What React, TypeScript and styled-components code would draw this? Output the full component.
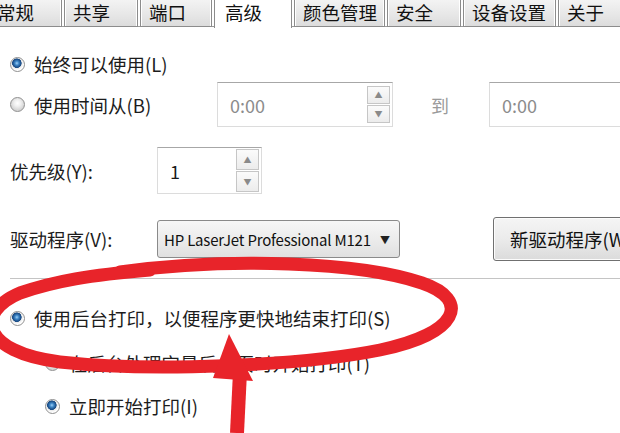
import styled, { createGlobalStyle } from "styled-components";

const GlobalStyle = createGlobalStyle`
  html, body {
    margin: 0;
    padding: 0;
    background: #ffffff;
  }
  body {
    width: 620px;
    height: 433px;
    overflow: hidden;
    font-family: "Noto Sans CJK SC", "Noto Sans", sans-serif;
    color: #1c1c1c;
  }
`;

const Page = styled.div`
  position: relative;
  width: 620px;
  height: 433px;
  overflow: hidden;
  background: #fff;
`;

const TabBar = styled.div`
  display: flex;
  height: 27px;
  margin-left: -12px;
  border-bottom: 1px solid #9a9a9a;
  box-sizing: border-box;
`;

const Tab = styled.div<{ $w: number; $active?: boolean }>`
  flex: none;
  width: ${(p) => p.$w}px;
  box-sizing: border-box;
  margin-right: 2px;
  padding-left: ${(p) => (p.$active ? 10 : 8)}px;
  height: ${(p) => (p.$active ? 28 : 27)}px;
  border: 1px solid #8c8c8c;
  border-top: none;
  border-bottom: ${(p) => (p.$active ? "none" : "1px solid #8c8c8c")};
  background: ${(p) =>
    p.$active ? "#ffffff" : "linear-gradient(#f3f3f3, #e6e6e6 60%, #dcdcdc)"};
  font-size: 18.5px;
  line-height: 25px;
  color: #111;
  white-space: nowrap;
  overflow: hidden;
  box-shadow: ${(p) => (p.$active ? "none" : "inset 1px 0 0 #fff, inset -1px 0 0 #fff")};
`;

const Content = styled.div`
  display: flex;
  flex-direction: column;
  padding-left: 10px;
`;

const Row = styled.div<{ $h: number; $mt: number; $indent?: number }>`
  display: flex;
  align-items: center;
  height: ${(p) => p.$h}px;
  margin-top: ${(p) => p.$mt}px;
  padding-left: ${(p) => p.$indent ?? 0}px;
  font-size: 18.5px;
  white-space: nowrap;
`;

const Label = styled.span<{ $w?: number }>`
  flex: none;
  width: ${(p) => (p.$w ? `${p.$w}px` : "auto")};
  color: #1c1c1c;
`;

const RadioDot = styled.span<{ $on?: boolean }>`
  flex: none;
  width: 15px;
  height: 15px;
  margin-right: 9px;
  border-radius: 50%;
  box-sizing: border-box;
  border: 1px solid #8f8f8f;
  background: ${(p) =>
    p.$on
      ? "radial-gradient(circle at 45% 40%, #9fd0f5 0, #3d86c8 2px, #1d4f88 4px, #1d4f88 4.5px, #e9e9e9 5px, #ffffff 7px)"
      : "radial-gradient(circle at 50% 40%, #ffffff 0, #f1f1f1 3px, #d4d4d4 7px)"};
`;

const Field = styled.div<{ $w: number; $h: number }>`
  flex: none;
  display: flex;
  align-items: center;
  box-sizing: border-box;
  width: ${(p) => p.$w}px;
  height: ${(p) => p.$h}px;
  border: 1px solid #dcdcdc;
  border-top-color: #a7a7a7;
  background: #fff;
  padding-left: 12px;
  font-size: 18px;
`;

const FieldText = styled.span<{ $muted?: boolean }>`
  flex: 1;
  color: ${(p) => (p.$muted ? "#8c8c8c" : "#1a1a1a")};
`;

const Spinner = styled.div<{ $h: number }>`
  flex: none;
  display: flex;
  flex-direction: column;
  width: 23px;
  height: ${(p) => p.$h}px;
  margin-right: 2px;
  gap: 1px;
`;

const SpinBtn = styled.div`
  flex: 1;
  display: flex;
  align-items: center;
  justify-content: center;
  border: 1px solid #c6c6c6;
  background: linear-gradient(#fbfbfb, #ececec);
  font-size: 8px;
  color: #8a8a8a;
  line-height: 1;
`;

const To = styled.span`
  flex: none;
  margin: 0 40px 0 38px;
  color: #9a9a9a;
  font-size: 18px;
`;

const Select = styled.div`
  flex: none;
  display: flex;
  align-items: center;
  box-sizing: border-box;
  width: 243px;
  height: 38px;
  padding: 0 9px 0 6px;
  border: 1px solid #8a8a8a;
  border-radius: 3px;
  background: linear-gradient(#f7f7f7, #ececec 50%, #e0e0e0);
  font-size: 15px;
  color: #111;
`;

const SelectText = styled.span`
  flex: 1;
  letter-spacing: -0.2px;
`;

const Caret = styled.span`
  font-size: 10px;
  color: #222;
`;

const Button = styled.div`
  flex: none;
  display: flex;
  align-items: center;
  box-sizing: border-box;
  width: 160px;
  height: 44px;
  margin-left: 93px;
  padding-left: 16px;
  border: 1px solid #707070;
  border-radius: 3px;
  background: linear-gradient(#f5f5f5, #ebebeb 50%, #dbdbdb);
  box-shadow: inset 0 0 0 1px #fcfcfc;
  font-size: 18.5px;
  color: #111;
`;

const Divider = styled.div`
  height: 1px;
  margin-top: 17px;
  background: #c4c4c4;
`;

const Overlay = styled.svg`
  position: absolute;
  left: 0;
  top: 0;
  pointer-events: none;
`;

const tabs = [
  { label: "常规", w: 74 },
  { label: "共享", w: 74 },
  { label: "端口", w: 72 },
  { label: "高级", w: 78, active: true },
  { label: "颜色管理", w: 91 },
  { label: "安全", w: 74 },
  { label: "设备设置", w: 93 },
  { label: "关于", w: 80 },
];

export default function App() {
  return (
    <Page>
      <GlobalStyle />
      <TabBar>
        {tabs.map((t) => (
          <Tab key={t.label} $w={t.w} $active={t.active}>
            {t.label}
          </Tab>
        ))}
      </TabBar>
      <Content>
        <Row $h={34} $mt={20}>
          <RadioDot $on />
          <Label>始终可以使用(L)</Label>
        </Row>
        <Row $h={45} $mt={1}>
          <RadioDot />
          <Label $w={183}>使用时间从(B)</Label>
          <Field $w={176} $h={45}>
            <FieldText $muted>0:00</FieldText>
            <Spinner $h={37}>
              <SpinBtn>▲</SpinBtn>
              <SpinBtn>▼</SpinBtn>
            </Spinner>
          </Field>
          <To>到</To>
          <Field $w={150} $h={45}>
            <FieldText $muted>0:00</FieldText>
          </Field>
        </Row>
        <Row $h={47} $mt={20}>
          <Label $w={147}>优先级(Y):</Label>
          <Field $w={105} $h={47}>
            <FieldText>1</FieldText>
            <Spinner $h={43}>
              <SpinBtn>▲</SpinBtn>
              <SpinBtn>▼</SpinBtn>
            </Spinner>
          </Field>
        </Row>
        <Row $h={44} $mt={23}>
          <Label $w={147}>驱动程序(V):</Label>
          <Select>
            <SelectText>HP LaserJet Professional M121</SelectText>
            <Caret>▼</Caret>
          </Select>
          <Button>新驱动程序(W)...</Button>
        </Row>
        <Divider />
        <Row $h={36} $mt={21}>
          <RadioDot $on />
          <Label>使用后台打印，以便程序更快地结束打印(S)</Label>
        </Row>
        <Row $h={36} $mt={9} $indent={35}>
          <RadioDot />
          <Label>在后台处理完最后一页时开始打印(T)</Label>
        </Row>
        <Row $h={36} $mt={7} $indent={35}>
          <RadioDot $on />
          <Label>立即开始打印(I)</Label>
        </Row>
      </Content>
      <Overlay width="620" height="433" viewBox="0 0 620 433">
        <path
          d="M 120 272 C 230 257 360 262 422 283 C 472 300 458 334 380 350 C 300 366 150 372 60 362 C -20 352 -25 312 20 293 C 55 281 90 275 150 270"
          fill="none"
          stroke="#e8242a"
          strokeWidth="13"
          strokeLinecap="round"
        />
        <path d="M 237 433 L 240 372" stroke="#e8242a" strokeWidth="14" />
        <polygon points="229,334 253,381 213,378" fill="#e8242a" />
      </Overlay>
    </Page>
  );
}
